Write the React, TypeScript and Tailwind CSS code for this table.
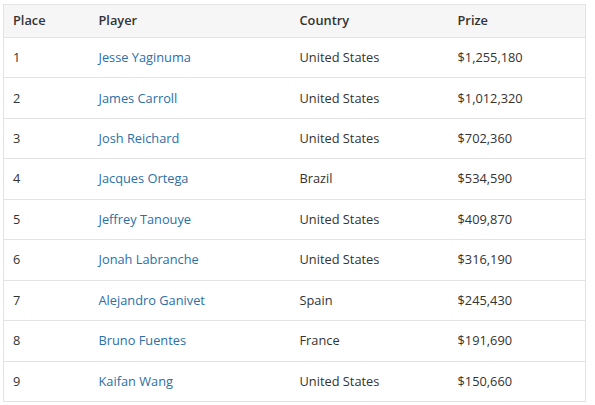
const rows = [
  { place: 1, player: "Jesse Yaginuma", country: "United States", prize: "$1,255,180" },
  { place: 2, player: "James Carroll", country: "United States", prize: "$1,012,320" },
  { place: 3, player: "Josh Reichard", country: "United States", prize: "$702,360" },
  { place: 4, player: "Jacques Ortega", country: "Brazil", prize: "$534,590" },
  { place: 5, player: "Jeffrey Tanouye", country: "United States", prize: "$409,870" },
  { place: 6, player: "Jonah Labranche", country: "United States", prize: "$316,190" },
  { place: 7, player: "Alejandro Ganivet", country: "Spain", prize: "$245,430" },
  { place: 8, player: "Bruno Fuentes", country: "France", prize: "$191,690" },
  { place: 9, player: "Kaifan Wang", country: "United States", prize: "$150,660" },
];

export default function App() {
  return (
    <div className="w-[595px] h-[405px] bg-white pl-[3px] pt-[4px] font-['Open_Sans',sans-serif] text-[12.8px] text-[#333]">
      <table className="w-[582px] border border-[#e3e3e3] border-collapse table-fixed">
        <colgroup>
          <col className="w-[86px]" />
          <col className="w-[201px]" />
          <col className="w-[158px]" />
          <col className="w-[137px]" />
        </colgroup>
        <thead>
          <tr className="h-[33px] bg-[#f6f6f6] text-left">
            <th className="pl-[9px] font-semibold">Place</th>
            <th className="pl-[9px] font-semibold">Player</th>
            <th className="pl-[9px] font-semibold">Country</th>
            <th className="pl-[9px] font-semibold">Prize</th>
          </tr>
        </thead>
        <tbody>
          {rows.map((r) => (
            <tr key={r.place} className="h-[40.45px] border-t border-[#e3e3e3]">
              <td className="pl-[9px]">{r.place}</td>
              <td className="pl-[9px] text-[#2b6fa6]">{r.player}</td>
              <td className="pl-[9px]">{r.country}</td>
              <td className="pl-[9px]">{r.prize}</td>
            </tr>
          ))}
        </tbody>
      </table>
    </div>
  );
}
